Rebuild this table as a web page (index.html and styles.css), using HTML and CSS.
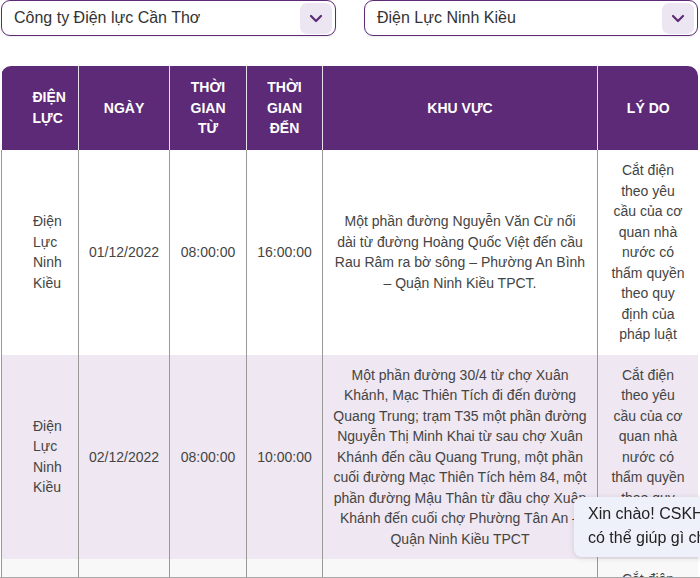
FILE: index.html
```html
<!DOCTYPE html>
<html lang="vi">
<head>
<meta charset="utf-8">
<title>Lịch cắt điện</title>
<link rel="stylesheet" href="styles.css">
</head>
<body>
<div class="filters">
  <div class="select select-company">
    <span class="select-label">Công ty Điện lực Cần Thơ</span>
    <span class="select-btn"><svg width="14" height="9" viewBox="0 0 14 9"><path d="M2 2 L7 7 L12 2" fill="none" stroke="#5c2a76" stroke-width="2.2" stroke-linecap="round" stroke-linejoin="round"/></svg></span>
  </div>
  <div class="select select-branch">
    <span class="select-label">Điện Lực Ninh Kiều</span>
    <span class="select-btn"><svg width="14" height="9" viewBox="0 0 14 9"><path d="M2 2 L7 7 L12 2" fill="none" stroke="#5c2a76" stroke-width="2.2" stroke-linecap="round" stroke-linejoin="round"/></svg></span>
  </div>
</div>

<div class="table-wrap">
<table class="outage">
  <colgroup>
    <col class="w-dl"><col class="w-date"><col class="w-from"><col class="w-to"><col class="w-area"><col class="w-reason">
  </colgroup>
  <thead>
    <tr>
      <th class="col-dl">ĐIỆN LỰC</th>
      <th>NGÀY</th>
      <th>THỜI GIAN TỪ</th>
      <th>THỜI GIAN ĐẾN</th>
      <th class="col-area">KHU VỰC</th>
      <th>LÝ DO</th>
    </tr>
  </thead>
  <tbody>
    <tr>
      <td class="col-dl">Điện Lực Ninh Kiều</td>
      <td>01/12/2022</td>
      <td>08:00:00</td>
      <td>16:00:00</td>
      <td class="col-area">Một phần đường Nguyễn Văn Cừ nối<br>dài từ đường Hoàng Quốc Việt đến cầu<br>Rau Râm ra bờ sông – Phường An Bình<br>– Quận Ninh Kiều TPCT.</td>
      <td class="col-reason">Cắt điện theo yêu cầu của cơ quan nhà nước có thẩm quyền theo quy định của pháp luật</td>
    </tr>
    <tr>
      <td class="col-dl">Điện Lực Ninh Kiều</td>
      <td>02/12/2022</td>
      <td>08:00:00</td>
      <td>10:00:00</td>
      <td class="col-area">Một phần đường 30/4 từ chợ Xuân<br>Khánh, Mạc Thiên Tích đi đến đường<br>Quang Trung; trạm T35 một phần đường<br>Nguyễn Thị Minh Khai từ sau chợ Xuân<br>Khánh đến cầu Quang Trung, một phần<br>cuối đường Mạc Thiên Tích hẻm 84, một<br>phần đường Mậu Thân từ đầu chợ Xuân<br>Khánh đến cuối chợ Phường Tân An –<br>Quận Ninh Kiều TPCT</td>
      <td class="col-reason">Cắt điện theo yêu cầu của cơ quan nhà nước có thẩm quyền theo quy định của pháp luật</td>
    </tr>
    <tr class="row-faded">
      <td class="col-dl">Điện Lực Ninh Kiều</td>
      <td>03/12/2022</td>
      <td>08:00:00</td>
      <td>16:00:00</td>
      <td class="col-area">Một phần đường Trần Hưng Đạo từ cầu<br>Cái Khế đến đường Nguyễn Văn Cừ –<br>Phường An Nghiệp – Quận Ninh Kiều TPCT.</td>
      <td class="col-reason">Cắt điện theo yêu cầu của cơ quan nhà nước có thẩm quyền theo quy định của pháp luật</td>
    </tr>
  </tbody>
</table>
</div>

<div class="chat-bubble">
  <div>Xin chào! CSKH EVNSPC</div>
  <div>có thể giúp gì cho bạn?</div>
</div>
<div class="bottom-line"></div>
</body>
</html>
```

FILE: styles.css
```css
html, body {
  margin: 0;
  height: 100%;
  overflow: hidden;
}
body {
  font-family: "Liberation Sans", Arial, Helvetica, sans-serif;
  color: #444;
  background: #fff;
}

.filters {
  display: flex;
  gap: 28px;
  padding-left: 1px;
}
.select {
  box-sizing: border-box;
  height: 36px;
  border: 1px solid #5c2a76;
  border-radius: 9px;
  display: flex;
  align-items: center;
  justify-content: space-between;
  padding: 0 3px 0 12px;
  font-size: 16px;
  color: #333;
  box-shadow: 0 1px 2px rgba(0,0,0,0.08);
}
.select-company { width: 335px; }
.select-branch { width: 334px; }
.select-btn {
  width: 32px;
  height: 31px;
  border-radius: 7px;
  background: #ece6f2;
  display: flex;
  align-items: center;
  justify-content: center;
}

.table-wrap {
  margin-top: 30px;
  margin-left: 1px;
  width: 697px;
  border-radius: 10px 10px 0 0;
  overflow: hidden;
}
.outage {
  border-collapse: collapse;
  table-layout: fixed;
  width: 697px;
  font-size: 14px;
  line-height: 20.5px;
}
.w-dl { width: 77px; }
.w-date { width: 91px; }
.w-from { width: 77px; }
.w-to { width: 76px; }
.w-area { width: 275px; }
.w-reason { width: 101px; }

.outage th {
  background: #5c2a76;
  color: #fff;
  font-weight: bold;
  padding: 11px 12px 11.5px;
  border-left: 1px solid #e6e0ea;
  text-align: center;
  vertical-align: middle;
}
.outage th:first-child { border-left: none; }

.outage td {
  padding: 10px 10px;
  border-left: 1px solid #999;
  border-right: 1px solid #999;
  text-align: center;
  vertical-align: middle;
  background: #fff;
}
.outage .col-dl {
  text-align: left;
  padding-left: 31px;
  padding-right: 8px;
}
.outage .col-area {
  padding-left: 4px;
  padding-right: 4px;
  white-space: nowrap;
}
.outage tbody tr:nth-child(even) td { background: #efe7f1; }
.outage tbody tr.row-faded td { background: #f8f8f8; }

.chat-bubble {
  position: fixed;
  left: 574px;
  top: 497px;
  width: 220px;
  height: 60px;
  box-sizing: border-box;
  padding: 5px 0 0 14px;
  background: #eff1fa;
  border-radius: 8px;
  box-shadow: 0 1px 6px rgba(0,0,0,0.12);
  font-size: 16px;
  line-height: 24px;
  color: #222;
  white-space: nowrap;
}
.bottom-line {
  position: fixed;
  left: 0;
  right: 0;
  bottom: 0;
  height: 1px;
  background: #aaa;
}
```
